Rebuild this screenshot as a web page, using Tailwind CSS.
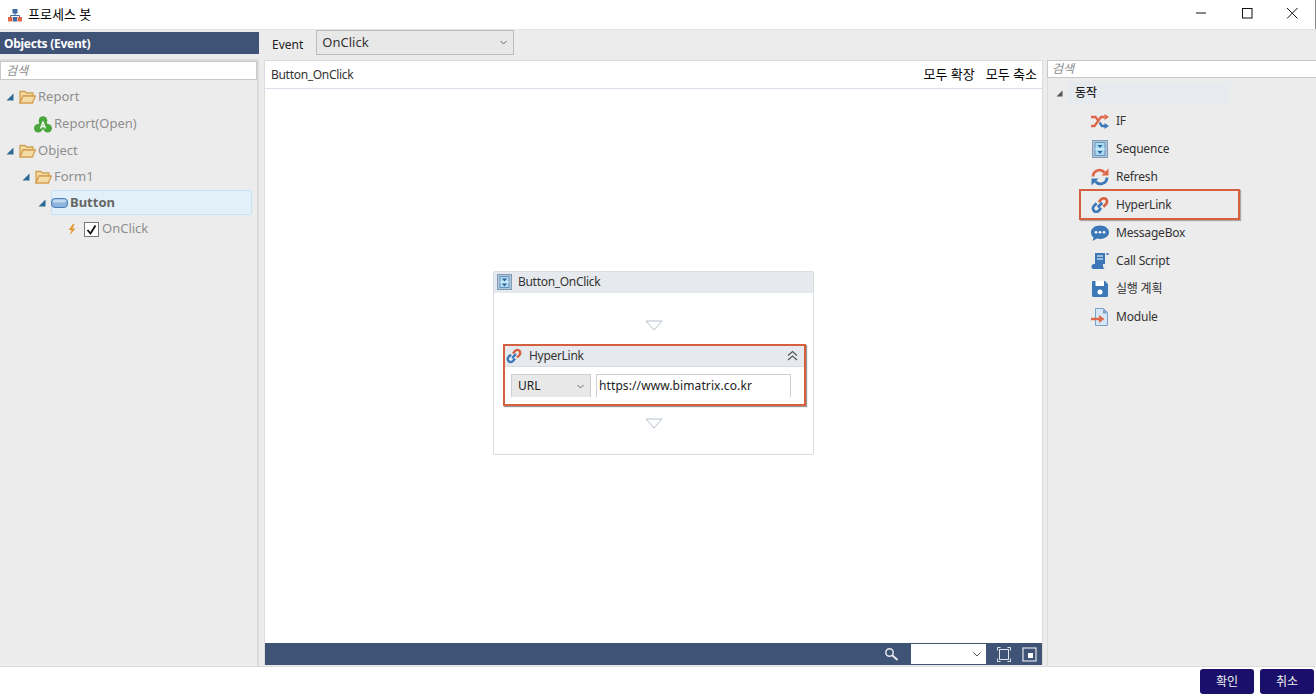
<!DOCTYPE html>
<html lang="ko">
<head>
<meta charset="utf-8">
<script src="https://cdn.jsdelivr.net/npm/@tailwindcss/browser@4"></script>
</head>
<body class="w-[1316px] h-[695px] overflow-hidden bg-white font-['Noto_Sans','Noto_Sans_CJK_KR',sans-serif] text-[13px] text-[#333]">
<div class="flex flex-col h-[695px]">
  <!-- Title bar -->
  <div class="h-[29px] flex items-center bg-white shrink-0">
    <svg class="ml-[8px] w-[14px] h-[14px]" viewBox="0 0 14 14"><rect x="4.500" y="1" width="5" height="4.500" fill="#3c6ea5"/><path d="M7 5v3M2.500 9V7.500h9V9" stroke="#3c6ea5" fill="none"/><rect x="0" y="9" width="4.500" height="4.500" fill="#e0684a"/><rect x="9.500" y="9" width="4.500" height="4.500" fill="#e0684a"/><rect x="5" y="9" width="4" height="4.500" fill="#3c6ea5"/></svg>
    <span class="ml-[6px] text-[13px] text-black">프로세스 봇</span>
    <div class="ml-auto flex items-center h-full">
      <svg class="w-[46px] h-[29px]" viewBox="0 0 46 29"><path d="M19 13h10" stroke="#111" /></svg>
      <svg class="w-[46px] h-[29px]" viewBox="0 0 46 29"><rect x="19.500" y="8.500" width="9.500" height="9.500" fill="none" stroke="#111"/></svg>
      <svg class="w-[46px] h-[29px]" viewBox="0 0 46 29"><path d="M18 8l10.500 10.500M28.500 8l-10.500 10.500" stroke="#111" fill="none"/></svg>
      <div class="w-[1px] h-full bg-[#888]"></div>
    </div>
  </div>
  <!-- Body -->
  <div class="h-[637px] bg-[#ececec] flex shrink-0 border-t border-[#e4e4e4]">
    <!-- Left panel -->
    <div class="w-[259px] flex flex-col shrink-0">
      <div class="mt-[2px] h-[22px] bg-[#3f5377] text-white font-bold text-[12px] tracking-[-0.27px] flex items-center pl-[4px] pt-[1px] shrink-0">Objects (Event)</div>
      <div class="mt-[5px] flex-1 border-2 border-b-0 border-[#dcdcdc] border-l-0 flex flex-col min-h-0">
        <div class="h-[19px] bg-white border border-[#c8c8c8] flex items-center pl-[5px] text-[12px] italic text-[#8a8a8a] shrink-0">검색</div>
        <div class="relative flex-1 text-[#8e8e8e]">
          <div class="h-[26px] mt-[4px] flex items-center pl-[6px] gap-[5px]">
            <svg class="w-[8px] h-[8px]" viewBox="0 0 8 8"><path d="M7.500 0.500V7.500H0.500z" fill="#2c6a94"/></svg>
            <svg class="w-[17px] h-[14px]" viewBox="0 0 17 14"><path d="M1 13V1.500h5l1.500 1.500H14V6H4z" fill="#f5dba6" stroke="#d3a050" stroke-width="1.300"/><path d="M1 13l3-7h12.300l-3 7z" fill="#f5dba6" stroke="#d3a050" stroke-width="1.300"/></svg>
            <span class="ml-[-3px]">Report</span>
          </div>
          <div class="h-[28px] flex items-center pl-[34px] gap-[2px]">
            <svg class="w-[18px] h-[17px]" viewBox="0 0 18 17"><g fill="#4aa63c"><circle cx="9" cy="4.500" r="4.300"/><circle cx="4.300" cy="12.300" r="4.300"/><circle cx="13.700" cy="12.300" r="4.300"/><circle cx="9" cy="9" r="4.500"/></g><path d="M6.500 12.500L9 6l2.500 6.500M7.500 10.500h3" stroke="#fff" stroke-width="1.300" fill="none"/></svg>
            <span>Report(Open)</span>
          </div>
          <div class="h-[26px] flex items-center pl-[6px] gap-[5px]">
            <svg class="w-[8px] h-[8px]" viewBox="0 0 8 8"><path d="M7.500 0.500V7.500H0.500z" fill="#2c6a94"/></svg>
            <svg class="w-[17px] h-[14px]" viewBox="0 0 17 14"><path d="M1 13V1.500h5l1.500 1.500H14V6H4z" fill="#f5dba6" stroke="#d3a050" stroke-width="1.300"/><path d="M1 13l3-7h12.300l-3 7z" fill="#f5dba6" stroke="#d3a050" stroke-width="1.300"/></svg>
            <span class="ml-[-3px]">Object</span>
          </div>
          <div class="h-[26px] flex items-center pl-[22px] gap-[5px]">
            <svg class="w-[8px] h-[8px]" viewBox="0 0 8 8"><path d="M7.500 0.500V7.500H0.500z" fill="#2c6a94"/></svg>
            <svg class="w-[17px] h-[14px]" viewBox="0 0 17 14"><path d="M1 13V1.500h5l1.500 1.500H14V6H4z" fill="#f5dba6" stroke="#d3a050" stroke-width="1.300"/><path d="M1 13l3-7h12.300l-3 7z" fill="#f5dba6" stroke="#d3a050" stroke-width="1.300"/></svg>
            <span class="ml-[-3px]">Form1</span>
          </div>
          <div class="h-[26px] flex items-start pl-[38px]">
            <svg class="w-[8px] h-[8px] mt-[9px]" viewBox="0 0 8 8"><path d="M7.500 0.500V7.500H0.500z" fill="#2c6a94"/></svg>
            <div class="ml-[5px] w-[201px] h-[25px] bg-[#e2f1f9] border border-[#c5e3f3] rounded-[2px] flex items-center">
              <svg class="w-[17px] h-[10px] ml-[-1px]" viewBox="0 0 17 10"><rect x="0.500" y="0.500" width="16" height="9" rx="3.500" fill="#8db4dc" stroke="#4d7fb6"/><rect x="2" y="1.500" width="13" height="3" rx="1.500" fill="#c5dbf0"/></svg>
              <span class="ml-[2px] font-bold text-[#666]">Button</span>
            </div>
          </div>
          <div class="h-[26px] flex items-center pl-[68px]">
            <svg class="w-[8px] h-[11px]" viewBox="0 0 8 11"><path d="M5 0L0.500 6h3L2 11l5.500-6.500h-3L6.500 0z" fill="#e09a30"/></svg>
            <div class="ml-[8px] w-[15px] h-[15px] bg-white border border-[#777] flex items-center justify-center">
              <svg class="w-[11px] h-[11px]" viewBox="0 0 11 11"><path d="M1.500 6l3 3.500 5-8" stroke="#111" stroke-width="1.800" fill="none"/></svg>
            </div>
            <span class="ml-[3px]">OnClick</span>
          </div>
        </div>
      </div>
    </div>
    <!-- Center -->
    <div class="w-[788px] shrink-0 flex flex-col pl-[5px] pr-[4px] pb-[1px]">
      <div class="h-[30px] flex items-start shrink-0">
        <span class="ml-[8px] mt-[6px] text-[12px] text-[#222]">Event</span>
        <div class="ml-[13px] w-[198px] h-[25px] bg-[#e8e8e8] border border-[#bcbcbc] flex items-center pl-[5px] text-[#333]">
          <span>OnClick</span>
          <svg class="ml-auto mr-[6px] w-[7px] h-[5px]" viewBox="0 0 7 5"><path d="M0.500 1l3 3 3-3" stroke="#666" fill="none"/></svg>
        </div>
      </div>
      <div class="flex-1 flex flex-col min-h-0 bg-white border border-[#dcdcdc] border-b-0">
        <div class="h-[28px] border-b border-[#d9dfea] flex items-center pl-[6px] pr-[5px] pt-[1px] shrink-0 text-[12px] text-[#333]">
          <span class="tracking-[-0.3px]">Button_OnClick</span>
          <span class="ml-auto text-black text-[13px]">모두 확장</span>
          <span class="ml-[11px] text-black text-[13px]">모두 축소</span>
        </div>
        <div class="flex-1 flex items-center justify-center pb-[7px] min-h-0">
          <div class="w-[321px] h-[184px] bg-white border border-[#d8dde3] rounded-[2px] flex flex-col">
            <div class="h-[21px] bg-[#e6eaee] flex items-center pl-[3px] shrink-0 text-[12px] text-[#333]">
              <svg class="w-[15px] h-[16px]" viewBox="0 0 15 16"><rect x="0.500" y="0.500" width="14" height="15" fill="#b3c7dc" stroke="#7f9cb8"/><rect x="3" y="2.500" width="9" height="11" fill="#a8dcf2" stroke="#6d93b8"/><path d="M3 8h9" stroke="#eaf2fa"/><path d="M5 4.500h5L7.500 7.500zM5 9.500h5L7.500 12.500z" fill="#2f62a0"/></svg>
              <span class="ml-[6px] tracking-[-0.3px]">Button_OnClick</span>
            </div>
            <div class="flex justify-center mt-[27px] shrink-0">
              <svg class="w-[18px] h-[11px]" viewBox="0 0 18 11"><path d="M1 1h16L9 10z" fill="#fff" stroke="#b5c1d0"/></svg>
            </div>
            <div class="ml-[9px] mr-[7px] mt-[13px] h-[62px] border-[2px] border-[#d65f3f] shadow-[1px_1px_1px_#999] bg-white flex flex-col shrink-0">
              <div class="h-[21px] bg-[#e6eaee] border-b border-[#d8dde3] flex items-center pl-[1px] pr-[6px] shrink-0 text-[12px] text-[#333]">
                <svg class="w-[16px] h-[16px]" viewBox="0 0 16 16"><path d="M7 5.500l2-2.500a3 3 0 0 1 4.500 4L11 9.500" stroke="#d65f3f" stroke-width="2.400" fill="none"/><path d="M9 10.500l-2 2.500a3 3 0 0 1-4.500-4L5 6.500M10 6l-4 4" stroke="#3c78b8" stroke-width="2.400" fill="none"/></svg>
                <span class="ml-[7px] tracking-[-0.3px]">HyperLink</span>
                <svg class="ml-auto w-[11px] h-[11px]" viewBox="0 0 11 11"><path d="M1 5.500l4.500-4 4.500 4M1 10l4.500-4 4.500 4" stroke="#555" stroke-width="1.200" fill="none"/></svg>
              </div>
              <div class="flex mt-[7px] pl-[6px] text-[12px]">
                <div class="w-[80px] h-[23px] bg-[#e8e8e8] border-l border-t border-r border-[#cfcfcf] flex items-center pl-[6px] pt-[1px] text-[#222]">
                  <span>URL</span>
                  <svg class="ml-auto mr-[6px] w-[7px] h-[5px]" viewBox="0 0 7 5"><path d="M0.500 1l3 3 3-3" stroke="#666" fill="none"/></svg>
                </div>
                <div class="ml-[5px] w-[195px] h-[23px] bg-white border-l border-t border-r border-[#cfcfcf] flex items-center pl-[2px] pt-[1px] text-[#222] tracking-[0.1px]">https://www.bimatrix.co.kr</div>
              </div>
            </div>
            <div class="flex justify-center mt-[12px] shrink-0">
              <svg class="w-[18px] h-[11px]" viewBox="0 0 18 11"><path d="M1 1h16L9 10z" fill="#fff" stroke="#b5c1d0"/></svg>
            </div>
          </div>
        </div>
        <div class="h-[22px] bg-[#3f5377] flex items-center shrink-0 pr-[5px]">
          <svg class="ml-auto w-[15px] h-[15px]" viewBox="0 0 15 15"><circle cx="5.500" cy="5.500" r="3.700" fill="none" stroke="#e8e8e8" stroke-width="1.500"/><path d="M8.500 8.500l5 4.500" stroke="#e8e8e8" stroke-width="2"/></svg>
          <div class="ml-[12px] w-[75px] h-[20px] bg-white flex items-center">
            <svg class="ml-auto mr-[5px] w-[8px] h-[5px]" viewBox="0 0 8 5"><path d="M0.500 0.500l3.500 3.500 3.500-3.500" stroke="#555" fill="none"/></svg>
          </div>
          <svg class="ml-[11px] w-[14px] h-[15px]" viewBox="0 0 14 15"><rect x="2.500" y="2.500" width="9" height="10" fill="none" stroke="#dfe3ea"/><path d="M0.500 3.500v-3h3M10.500 0.500h3v3M13.500 11.500v3h-3M3.500 14.500h-3v-3" stroke="#dfe3ea" fill="none"/></svg>
          <svg class="ml-[11px] w-[15px] h-[15px]" viewBox="0 0 15 15"><rect x="1" y="1" width="13" height="13" fill="none" stroke="#dfe3ea" stroke-width="1.200"/><rect x="6" y="6" width="5" height="5" fill="#fff"/></svg>
        </div>
      </div>
    </div>
    <!-- Right -->
    <div class="flex-1 flex flex-col pt-[30px] min-w-0">
      <div class="h-[18px] bg-white border border-[#c8c8c8] border-r-0 flex items-center pl-[4px] text-[12px] italic text-[#8a8a8a] shrink-0">검색</div>
      <div class="flex-1 flex flex-col border-l border-[#dcdcdc] min-h-0">
        <div class="flex items-center h-[22px] mt-[4px] pl-[8px] shrink-0">
          <svg class="w-[7px] h-[7px]" viewBox="0 0 7 7"><path d="M6.500 0.500V6.500H0.500z" fill="#555"/></svg>
          <div class="ml-[5px] w-[162px] h-[22px] bg-[#e7ebef] flex items-center pl-[7px] text-[12px] text-[#222] font-medium">동작</div>
        </div>
        <div class="pl-[43px] mt-[3px] text-[12px] text-[#333] tracking-[-0.2px]">
          <div class="h-[28px] flex items-center gap-[7px]">
            <svg class="w-[18px] h-[15px]" viewBox="0 0 18 15"><path d="M0 3h4.500l3 4M0 12h3.500l6.500-9h3.500" stroke="#e0684a" stroke-width="2.300" fill="none"/><path d="M8.500 8.500l2.500 3.500h3" stroke="#3c78b8" stroke-width="2.300" fill="none"/><path d="M13.500 0l4.500 3-4.500 3z" fill="#e0684a"/><path d="M13.500 9l4.500 3-4.500 3z" fill="#3c78b8"/></svg>
            <span>IF</span>
          </div>
          <div class="h-[28px] flex items-center gap-[7px]">
            <svg class="w-[18px] h-[18px]" viewBox="0 0 18 18"><rect x="1.500" y="0.500" width="15" height="17" fill="#b3c7dc" stroke="#7f9cb8"/><rect x="4" y="2.500" width="10" height="13" fill="#a8dcf2" stroke="#6d93b8"/><path d="M4 9h10" stroke="#eaf2fa"/><path d="M6.500 5h5L9 8zM6.500 11h5L9 14z" fill="#2f62a0"/></svg>
            <span>Sequence</span>
          </div>
          <div class="h-[28px] flex items-center gap-[7px]">
            <svg class="w-[18px] h-[18px]" viewBox="0 0 18 18"><path d="M2 8.500a6.500 6.500 0 0 1 11.500-4" stroke="#e0684a" stroke-width="2.800" fill="none"/><path d="M17.500 0.500v7h-7z" fill="#e0684a"/><path d="M16 9.500a6.500 6.500 0 0 1-11.500 4" stroke="#3c78b8" stroke-width="2.800" fill="none"/><path d="M0.500 17.500v-7h7z" fill="#3c78b8"/></svg>
            <span>Refresh</span>
          </div>
          <div class="h-[31px] -mt-[2px] -mb-[1px] -ml-[12px] w-[161px] border-[2px] border-[#d65f3f] shadow-[1px_1px_1px_#aaa] flex items-center gap-[7px] pl-[10px]">
            <svg class="w-[18px] h-[18px]" viewBox="0 0 16 16"><path d="M7 5.500l2-2.500a3 3 0 0 1 4.500 4L11 9.500" stroke="#d65f3f" stroke-width="2.400" fill="none"/><path d="M9 10.500l-2 2.500a3 3 0 0 1-4.500-4L5 6.500M10 6l-4 4" stroke="#3c78b8" stroke-width="2.400" fill="none"/></svg>
            <span>HyperLink</span>
          </div>
          <div class="h-[28px] flex items-center gap-[7px]">
            <svg class="w-[18px] h-[18px]" viewBox="0 0 18 18"><path d="M9 1.500c5 0 9 2.900 9 6.700s-4 6.700-9 6.700c-1 0-2-.1-2.900-.4L1.500 17l1-3.600C.9 12.100 0 10.300 0 8.200 0 4.400 4 1.500 9 1.500z" fill="#3c78b8"/><circle cx="5" cy="8.200" r="1.300" fill="#fff"/><circle cx="9" cy="8.200" r="1.300" fill="#fff"/><circle cx="13" cy="8.200" r="1.300" fill="#fff"/></svg>
            <span>MessageBox</span>
          </div>
          <div class="h-[28px] flex items-center gap-[7px]">
            <svg class="w-[18px] h-[18px]" viewBox="0 0 18 18"><path d="M4 1h10v11H4z" fill="#3c78b8"/><path d="M6 4h6M6 7h6" stroke="#fff"/><path d="M0.500 15c0-2 1-3 2.500-3h9v2c0 1.500 1 3 2 3H3c-1.500 0-2.500-.5-2.500-2z" fill="#3c78b8"/><rect x="15.500" y="1" width="2" height="2" fill="#3c78b8"/></svg>
            <span>Call Script</span>
          </div>
          <div class="h-[28px] flex items-center gap-[7px]">
            <svg class="w-[18px] h-[18px]" viewBox="0 0 18 18"><path d="M2 1h12l3 3v11.500a1.500 1.500 0 0 1-1.500 1.500h-13.500A1.500 1.500 0 0 1 1 15.500V2a1 1 0 0 1 1-1z" fill="#3c78b8"/><rect x="4.500" y="1" width="8.500" height="5" fill="#fff"/><circle cx="9" cy="12" r="2.500" fill="#fff"/></svg>
            <span>실행 계획</span>
          </div>
          <div class="h-[28px] flex items-center gap-[7px]">
            <svg class="w-[18px] h-[18px]" viewBox="0 0 18 18"><path d="M4.500 0.500h8l4 4v13h-12z" fill="#d5e6f5" stroke="#7ba0c6"/><path d="M12 0.500v5h4.500z" fill="#7ba0c6"/><path d="M0 11h9" stroke="#e0684a" stroke-width="2.400"/><path d="M8 7l5.500 4-5.500 4z" fill="#e0684a"/></svg>
            <span>Module</span>
          </div>
        </div>
      </div>
    </div>
  </div>
  <!-- Footer -->
  <div class="flex-1 bg-white flex items-start justify-end gap-[6px] pt-[2px] pr-[2px] border-t border-[#dcdcdc]">
    <button class="w-[54px] h-[25px] bg-[#1a0f6b] rounded-[3px] text-[#eee] text-[12px]">확인</button>
    <button class="w-[54px] h-[25px] bg-[#1a0f6b] rounded-[3px] text-[#eee] text-[12px]">취소</button>
  </div>
</div>
</body>
</html>
